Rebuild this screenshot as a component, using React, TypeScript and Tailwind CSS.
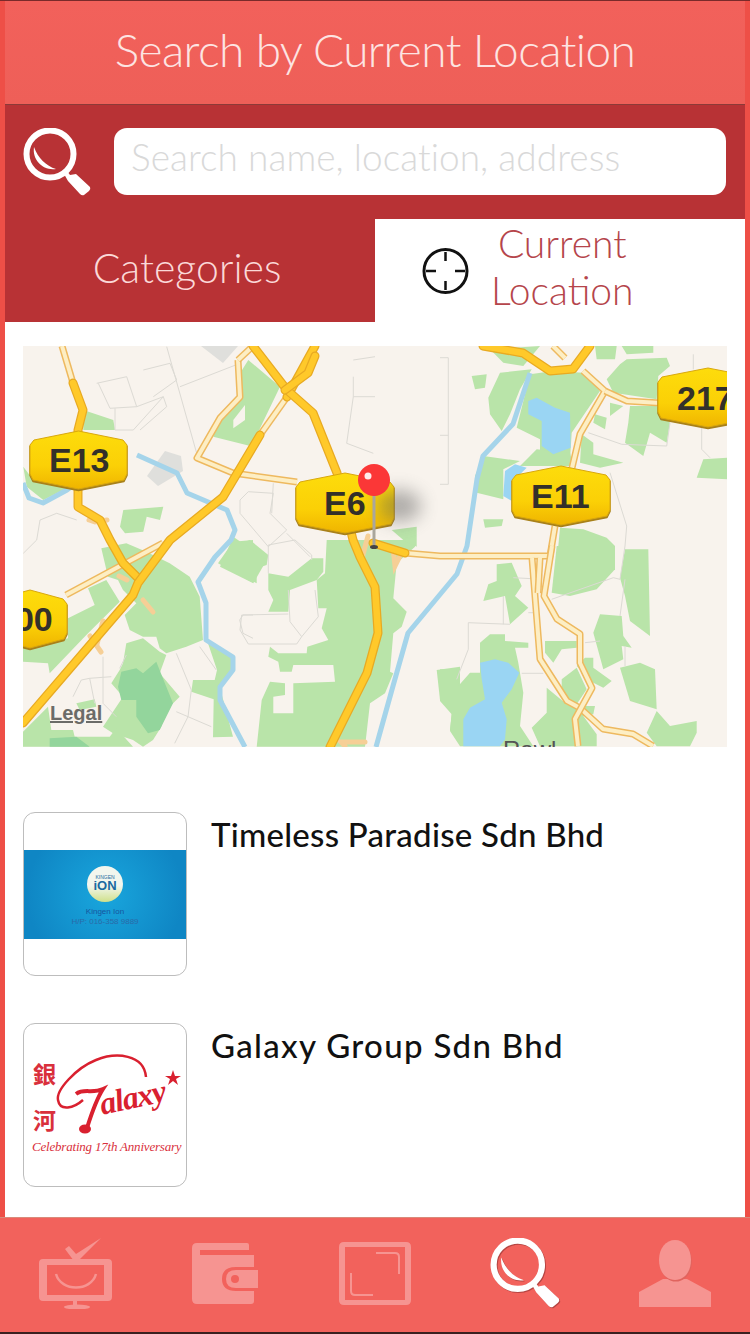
const sans = 'font-["Lato","Liberation_Sans",sans-serif]';

// map shapes were traced from crops, so each group carries its crop offset (crops are 3x)
const z = (ox: number, oy: number, pts: string) =>
  pts
    .split(' ')
    .map((p) => {
      const [x, y] = p.split(',').map(Number);
      return `${(ox + x / 3).toFixed(1)},${(oy + y / 3).toFixed(1)}`;
    })
    .join(' ');

const greens = [
  ...[
    '235,25 310,10 370,35 440,70 500,110 530,170 540,300 490,320 430,340 410,325 400,290 360,290 320,270 305,225 340,190 300,150 285,120 255,110',
    '135,235 215,195 195,145 250,120 290,185 190,285 80,400 75,370 0,365 0,325 135,295',
    '585,70 630,5 690,0 690,128',
    '300,370 310,310 360,295 410,335 430,345 410,400 470,470 430,510 415,560 390,600 360,620 330,600 270,580 240,560 300,470 265,430 290,390',
    '555,310 625,345 635,390 590,440 630,590 570,592 572,478 505,455 510,420 575,420 582,390',
    '0,575 75,500 85,570 150,570 155,590 260,590 280,565 330,620 0,620',
    '160,490 215,478 220,500 170,510',
  ].map((p) => z(0, 194, p)),
  ...[
    '0,20 60,0 115,45 110,75 80,85 80,130 0,90',
    '290,0 555,0 555,20 500,70 490,175 530,215 515,260 490,280 480,395 490,400 465,460 420,490 405,620 80,620 95,480 120,425 165,430 165,465 130,470 130,520 190,520 190,430 315,425 310,375 190,375 185,395 150,395 145,365 115,350 120,320 145,340 230,340 232,320 295,300 275,265 290,205 265,205 260,120 285,100',
    '115,100 175,110 245,55 280,55 280,95 260,120 180,150 175,215 115,215 130,180 115,150',
    '620,390 690,380 690,490 630,480',
    '665,520 690,520 690,575 660,570',
  ].map((p) => z(207, 194, p)),
  ...[
    '95,90 140,85 135,125 105,130',
    '145,155 180,80 275,70 240,130 210,205 185,255 150,205',
    '150,10 300,0 250,60 190,50',
    '270,85 340,75 430,80 480,135 395,260 390,340 300,320 300,280 230,245',
    '290,310 390,320 400,360 240,360',
    '130,330 240,345 190,370 190,460 110,440 105,390',
    '130,520 190,520 185,540 135,545',
    '500,100 540,55 560,40 680,35 690,60 655,90 650,160 520,140',
    '465,0 530,0 525,40 470,40',
    '545,0 640,0 640,20 560,25',
    '465,205 500,215 495,250 460,230',
    '570,180 650,180 690,230 680,290 630,260 610,330 555,290 565,230',
    '510,170 550,180 510,210',
    '425,265 460,290 460,325 550,350 480,365 420,350',
    '770,395 790,340 861,335 861,400',
    '360,545 430,550 500,575 525,600 355,600',
  ].map((p) => z(417, 0, p)),
  ...[
    '350,0 525,0 525,70 470,130 390,150 335,140',
    '555,10 625,10 630,270 570,225 555,150 540,95',
    '170,55 215,50 245,120 225,150 265,185 210,235 195,150 130,165 145,115 170,105',
    '480,205 545,210 550,270 575,305 545,300 550,340 490,370 460,260',
    '540,365 600,350 645,370 650,490 570,465',
    '650,495 690,540 770,525 770,560 750,601 650,601 620,560',
    '315,285 410,285 410,305 365,310 340,350 315,320',
    '435,335 460,335 460,365 515,405 490,425 460,410 410,360',
    '365,400 410,365 440,430 410,475 365,450',
    '320,425 380,475 440,480 465,480 460,505 430,510 470,565 470,601 300,601 275,545 320,500',
    '120,290 150,265 195,265 195,285 265,290 265,305 225,305 235,350 250,440 240,540 280,601 60,601 30,555 35,505 0,465 0,370 50,370 55,420 90,380 120,380',
  ].map((p) => z(417, 200, p)),
  ...[
    '745,60 840,140 780,265 760,320 640,290 650,240 715,180 720,100',
    '250,210 340,240 345,270 250,270',
    '70,380 100,420 200,445 130,480 80,440',
    '370,510 490,500 480,540 440,530 430,575 375,580 360,560',
    '660,680 700,590 800,660 760,730',
  ].map((p) => z(-23, -6, p)),
  z(352, -6, '50,570 125,560 125,620 85,600'),
];

const holes = [z(-23, -6, '700,240 735,195 735,240 700,265')];

const darkGreens = [
  z(0, 194, '295,395 340,385 360,400 400,365 430,440 450,490 410,570 375,580 340,530 340,480 295,480 285,440'),
  z(0, 194, '80,595 160,590 200,620 80,620'),
];

const streets = [
  ...[
    '240,350 240,490 280,530',
    '200,415 265,410',
    '150,470 175,420 200,415 215,490',
    '460,340 505,450 495,530 455,610',
    '460,515 495,530 565,560',
    '530,320 580,390',
    '290,385 310,345',
    '650,240 660,225 690,225',
    '650,240 660,280 690,295',
  ].map((p) => z(0, 194, p)),
  ...[
    '115,100 115,15 195,0 245,45 245,60',
    '175,150 180,245 215,290 265,230 255,150',
    '35,225 175,222',
    '35,225 30,270 55,312 200,312 215,290',
  ].map((p) => z(207, 194, p)),
  ...[
    '0,35 25,35 25,415 0,415',
    '0,268 25,268',
    '760,25 760,70',
    '785,245 785,310 810,335',
    '445,260 545,295 680,300 690,230',
    '510,380 560,540 555,600',
  ].map((p) => z(417, 0, p)),
  ...[
    '555,0 540,100 520,95 335,160',
    '540,210 555,100',
    '85,230 210,235',
    '85,230 85,310 50,400',
    '265,200 285,200',
    '190,150 190,235',
    '245,382 310,382',
    '220,95 275,98',
    '435,290 480,285',
    '555,300 555,360',
  ].map((p) => z(417, 200, p)),
  ...[
    '290,130 380,110 410,200 330,205 295,130',
    '345,205 345,270 400,270 490,170 410,200',
    '490,170 500,200 420,270',
    '430,90 510,70 530,120 460,170',
    '500,20 590,340',
    '540,140 720,70',
    '120,540 170,520 230,540',
    '120,540 110,600 70,640',
    '1060,110 1060,170 1040,310 1120,340',
    '1060,60 1125,50',
    '1060,170 1125,170',
    '720,480 745,455 820,460 810,520 860,570 805,620 720,520 720,480',
    '860,580 930,650',
    '820,430 815,520',
  ].map((p) => z(-23, -6, p)),
];

const water = [
  '0,137 6,152 20,157 44,144 70,125',
  '114,109 154,127 164,147 204,164 212,184 208,194 192,211 175,236 183,257 183,294 210,311 210,324 197,341 197,354 222,401',
  '507,27 490,78 460,110 454,133 444,200 434,228 385,287 370,340 353,401',
];

const lakes = [
  z(417, 0, '265,165 290,155 345,185 390,200 392,305 340,325 305,300 305,225 265,205'),
  z(417, 0, '195,375 225,355 260,365 225,400 215,465 190,450'),
  z(417, 200, '120,350 165,340 205,350 238,380 215,430 185,470 200,520 195,580 180,601 70,601 70,520 90,485 135,460 125,400'),
];

const greatRoads = [
  '50,37 60,64 55,84 55,161 77,174 87,194 100,217 115,232',
  '0,377 110,249 115,237 147,194 200,151 237,89',
  '264,51 292,0',
  '230,0 264,44 290,67 314,127 330,194 337,211 352,241 355,287 344,327 307,401',
  '460,0 500,7 527,25 550,23 567,0',
  '350,197 382,207',
  '262,44 285,27 292,10',
];

const paleRoads = [
  '39,0 50,37',
  '237,89 264,51',
  '215,14 217,51 197,72 174,112 210,127 274,136',
  '215,14 230,0',
  '43,249 140,197',
  '530,0 542,12',
  '560,25 582,45 557,88 549,122',
  '582,45 604,55 637,57',
  '532,180 527,210 417,210 382,207',
  '509,212 517,313 544,355 557,362 580,383 610,388 630,400',
  '529,200 521,250 534,273 557,288 557,317 569,342 552,373 555,400',
  '517,212 515,247',
];

const ramps = [
  '66,174 72,176 84,174',
  '96,230 104,234',
  '120,254 130,266',
  '67,290 78,306',
  '80,275 74,298',
  '322,400 318,396 342,396',
  '345,190 339,212',
  '370,202 372,220 378,208',
];

function Shield({ x, y, w, h, label, tx }: { x: number; y: number; w: number; h: number; label: string; tx: number }) {
  const id = 'shield-' + label;
  const points = `${x + 4},${y + 9} ${x + w / 2},${y} ${x + w - 4},${y + 9} ${x + w},${y + 14} ${x + w},${y + h - 15} ${x + w - 3},${y + h - 9} ${x + w / 2},${y + h} ${x + 3},${y + h - 9} ${x},${y + h - 15} ${x},${y + 14}`;
  return (
    <g>
      <defs>
        <linearGradient id={id} x1="0" y1="0" x2="0" y2="1">
          <stop offset="0" stopColor="#fddc0c" />
          <stop offset="0.6" stopColor="#fbd006" />
          <stop offset="1" stopColor="#efb400" />
        </linearGradient>
      </defs>
      <polygon points={points} fill="#a8801a" transform="translate(0 1.5)" stroke="#a8801a" strokeWidth="1.5" strokeLinejoin="round" />
      <polygon points={points} fill={`url(#${id})`} stroke="#d9a80e" strokeWidth="1" strokeLinejoin="round" />
      <text x={tx} y={y + h / 2 + 12} fontFamily="Liberation Sans, sans-serif" fontWeight="700" fontSize="34" fill="#33302a">
        {label}
      </text>
    </g>
  );
}

function MapView() {
  return (
    <svg viewBox="0 0 704 401" className="block h-[401px] w-[704px]">
      <defs>
        <filter id="pin-shadow" x="-100%" y="-100%" width="300%" height="300%">
          <feGaussianBlur stdDeviation="9" />
        </filter>
        <filter id="soft" x="0" y="0" width="100%" height="100%">
          <feGaussianBlur stdDeviation="0.6" />
        </filter>
      </defs>
      <g filter="url(#soft)">
        <rect width="704" height="401" fill="#f8f3ed" />
        <polygon points="178,0 215,0 200,17" fill="#dfdfdc" />
        <polygon points="124,130 142,105 158,110 160,125 135,140" fill="#dfdfdc" />
        {greens.map((p) => (
          <polygon key={p} points={p} fill="#b9e4a9" />
        ))}
        {holes.map((p) => (
          <polygon key={p} points={p} fill="#f8f3ed" />
        ))}
        {darkGreens.map((p) => (
          <polygon key={p} points={p} fill="#93d59c" />
        ))}
        {streets.map((p) => (
          <polyline key={p} points={p} fill="none" stroke="#dcdad4" strokeWidth="1" />
        ))}
        {water.map((p) => (
          <polyline key={p} points={p} fill="none" stroke="#a5d4ea" strokeWidth="5" strokeLinejoin="round" />
        ))}
        {lakes.map((p) => (
          <polygon key={p} points={p} fill="#9ad5f3" />
        ))}
        {ramps.map((p) => (
          <polyline key={p} points={p} fill="none" stroke="#f6cf96" strokeWidth="5" strokeLinecap="round" />
        ))}
        {paleRoads.map((p) => (
          <g key={p}>
            <polyline points={p} fill="none" stroke="#eeb95f" strokeWidth="7" strokeLinejoin="round" />
            <polyline points={p} fill="none" stroke="#fdeec4" strokeWidth="4" strokeLinejoin="round" />
          </g>
        ))}
        {greatRoads.map((p) => (
          <g key={p}>
            <polyline points={p} fill="none" stroke="#e8aa22" strokeWidth="9" strokeLinejoin="round" strokeLinecap="round" />
            <polyline points={p} fill="none" stroke="#ffc92c" strokeWidth="6.5" strokeLinejoin="round" strokeLinecap="round" />
          </g>
        ))}
      </g>
      <text x="480" y="412" fontFamily="Liberation Sans, sans-serif" fontSize="24" fill="#555">
        Rawl
      </text>
      <text x="27" y="374" fontFamily="Liberation Sans, sans-serif" fontWeight="700" fontSize="20" fill="#6b6b68" textDecoration="underline">
        Legal
      </text>
      <Shield x={7} y={85} w={97} h={58} label="E13" tx={26} />
      <Shield x={273} y={127} w={98} h={60} label="E6" tx={301} />
      <Shield x={489} y={120} w={98} h={59} label="E11" tx={508} />
      <Shield x={-30} y={244} w={74} h={58} label="900" tx={-27} />
      <Shield x={635} y={22} w={100} h={59} label="217" tx={654} />
      <ellipse cx="376" cy="160" rx="22" ry="16" fill="#555" opacity="0.45" filter="url(#pin-shadow)" />
      <rect x="349.5" y="148" width="3" height="53" fill="#a9a69c" />
      <ellipse cx="351" cy="201" rx="4" ry="2" fill="#444" />
      <circle cx="351" cy="134" r="16" fill="#fb3737" />
      <circle cx="345" cy="130" r="3.5" fill="#fff" opacity="0.9" />
    </svg>
  );
}

function SearchIcon({ className }: { className: string }) {
  return (
    <svg viewBox="0 0 68 68" className={className}>
      <circle cx="27" cy="26" r="23.5" fill="none" stroke="#fff" strokeWidth="6" />
      <path d="M11 19 C 9 32, 20 43, 33 41 C 23 38, 15 30, 11 19 Z" fill="#fff" />
      <path d="M41 46 L 44 43 L 47 47 L 53 46 L 67 59 Q 68 61 66 63 L 61 67 Q 59 68 57 66 L 45 53 Z" fill="#fff" />
    </svg>
  );
}

function TvIcon() {
  return (
    <svg viewBox="0 0 73 72" className="h-[72px] w-[73px]">
      <path d="M26 12 L 30 9 L 37 17 L 62 1 L 39 24 L 35 24 Z" fill="#f69491" />
      <path fillRule="evenodd" d="M4 22 H69 Q73 22 73 26 V 60 Q73 64 69 64 H 4 Q0 64 0 60 V 26 Q0 22 4 22 Z M8 28 V 58 H 65 V 28 Z" fill="#f69491" />
      <path d="M17 37 C 22 55, 52 55, 57 37" fill="none" stroke="#f69491" strokeWidth="2.5" />
      <path d="M36 64 V 69" stroke="#f69491" strokeWidth="4" />
      <ellipse cx="38" cy="70" rx="13" ry="2.5" fill="#f69491" />
    </svg>
  );
}

function WalletIcon() {
  return (
    <svg viewBox="0 0 66 61" className="h-[61px] w-[66px]">
      <path fillRule="evenodd" d="M5 0 H55 Q57 0 57 2 V 7 H8 V 12 H62 V 24 H44 Q30 24 30 36 Q30 48 44 48 H62 V 58 Q62 61 59 61 H5 Q0 61 0 56 V 5 Q0 0 5 0 Z" fill="#f69491" />
      <path fillRule="evenodd" d="M44 27 H66 V 45 H44 Q34 45 34 36 Q34 27 44 27 Z M43 32 A4 4 0 1 0 43 40 A4 4 0 1 0 43 32 Z" fill="#f69491" />
    </svg>
  );
}

function SquareIcon() {
  return (
    <svg viewBox="0 0 72 63" className="h-[63px] w-[72px]">
      <path fillRule="evenodd" d="M5 0 H67 Q72 0 72 5 V 58 Q72 63 67 63 H5 Q0 63 0 58 V 5 Q0 0 5 0 Z M6 5 V 58 H66 V 5 Z" fill="#f69491" />
      <path d="M37 11 H56 Q60 11 60 15 V 32" fill="none" stroke="#f69491" strokeWidth="2" />
      <path d="M12 31 V 49 Q12 53 16 53 H 34" fill="none" stroke="#f69491" strokeWidth="2" />
    </svg>
  );
}

const headPath = 'M36 0 C 27 0 20 8 20 20 C 20 32 27 40 36 40 C 45 40 52 32 52 20 C 52 8 45 0 36 0 Z';

function PersonIcon() {
  return (
    <svg viewBox="0 0 72 67" className="h-[67px] w-[72px]">
      <path d="M24 39 H 48 L 72 52 V 67 H 0 V 52 Z" fill="#f69491" />
      <path d={headPath} fill="#e0645e" transform="translate(0.8 1.6)" />
      <path d={headPath} fill="#f69491" />
    </svg>
  );
}

function CrosshairIcon() {
  return (
    <svg viewBox="0 0 47 46" className="h-[46px] w-[47px]">
      <circle cx="23.5" cy="23" r="21.5" fill="none" stroke="#111" strokeWidth="3" />
      <path d="M23.5 4 V 13 M23.5 33 V 42 M4 23 H 14 M33 23 H 43" stroke="#111" strokeWidth="2.5" />
    </svg>
  );
}

function KingenCard() {
  return (
    <div className="flex h-[89px] w-full flex-col items-center justify-start bg-[radial-gradient(circle_at_50%_50%,#19a6dd,#0f86c4_85%)] pt-[16px]">
      <div className="flex h-[36px] w-[36px] flex-col items-center justify-center rounded-full bg-[linear-gradient(#f2f6ee_55%,#cfe08a)] leading-none">
        <span className="font-['Liberation_Sans',sans-serif] text-[5px] text-[#1a6aa0]">KINGEN</span>
        <span className="font-['Liberation_Sans',sans-serif] text-[13px] font-bold leading-[12px] text-[#1a6aa0]">iON</span>
      </div>
      <span className="mt-[5px] font-['Liberation_Sans',sans-serif] text-[8px] leading-[10px] text-[#16559e]">Kingen Ion</span>
      <span className="font-['Liberation_Sans',sans-serif] text-[8px] leading-[10px] text-[#2a6aa8]">H/P: 016-358 9889</span>
    </div>
  );
}

function GalaxyLogo() {
  return (
    <div className="relative h-[162px] w-full overflow-hidden">
      <div className="absolute left-[9px] top-[26px] font-['Noto_Sans_CJK_TC',sans-serif] text-[23px] font-bold leading-[46px] text-[#d9303c]">
        <div>銀</div>
        <div>河</div>
      </div>
      <svg viewBox="0 0 162 162" className="absolute inset-0 h-[162px] w-[162px]">
        <path d="M122 53 C 120 30 92 28 72 36 C 52 44 32 66 34 76 C 36 88 50 84 59 76" fill="none" stroke="#d9202f" strokeWidth="2.5" />
        <path d="M52 70 C 60 64 68 70 79 65 C 72 76 68 88 63 104" fill="none" stroke="#d9202f" strokeWidth="4" />
        <ellipse cx="61" cy="105" rx="6" ry="4.5" fill="#d9202f" />
        <polygon points="149,46 151,52 157,52 152,55 154,61 149,57 144,61 146,55 141,52 147,52" fill="#d9202f" />
      </svg>
      <span className="absolute left-[76px] top-[64px] origin-left -rotate-12 font-['Liberation_Serif',serif] text-[32px] font-bold italic leading-none tracking-[-1px] text-[#d9202f]">
        alaxy
      </span>
      <span className="absolute left-[8px] top-[116px] whitespace-nowrap font-['Liberation_Serif',serif] text-[13px] italic leading-none tracking-[-0.2px] text-[#d9303c]">
        Celebrating 17th Anniversary
      </span>
    </div>
  );
}

function ResultRow({ name, children, className, nameClass }: { name: string; children: React.ReactNode; className: string; nameClass: string }) {
  return (
    <div className={`flex items-start gap-[24px] ${className}`}>
      <div className="flex h-[164px] w-[164px] shrink-0 items-center overflow-hidden rounded-[12px] border border-[#bdbdbd] bg-white">
        {children}
      </div>
      <div className={`${sans} pt-[1px] text-[33px] font-medium leading-[42px] text-[#111] ${nameClass}`}>{name}</div>
    </div>
  );
}

export default function App() {
  return (
    <div className={`${sans} flex h-[1334px] w-[750px] flex-col overflow-hidden bg-[#ee4f47]`}>
      <div className="h-px bg-[#7a2a2a]" />
      <div className="flex min-h-0 flex-1 flex-col px-[5px]">
        <header className="flex h-[104px] items-center justify-center border-b border-[#8d3a38] bg-[linear-gradient(#f2615b,#ee5f58)] pb-[6px] text-[46px] font-light leading-none tracking-[-0.6px] text-[#fde4e2]">
          Search by Current Location
        </header>

        <div className="flex h-[114px] items-start gap-[23px] bg-[#b83235] pl-[18px] pr-[19px] pt-[23px]">
          <SearchIcon className="h-[68px] w-[68px] shrink-0" />
          <input
            readOnly
            placeholder="Search name, location, address"
            className="h-[67px] min-w-0 flex-1 rounded-[13px] bg-white pb-[10px] pl-[17px] pr-[17px] text-[37px] tracking-[0.05px] font-light text-[#333] outline-none placeholder:text-[#d9d9d9]"
          />
        </div>

        <div className="flex h-[103px]">
          <button className="flex w-[370px] items-center justify-center bg-[#b83235] pb-[6px] pr-[6px] text-[41px] font-light text-[#fbd9d8]">
            Categories
          </button>
          <div className="flex flex-1 items-center bg-white pl-[47px]">
            <CrosshairIcon />
            <div className="ml-[22px] pb-[8px] text-center text-[39px] font-light leading-[47px] text-[#b5454b]">
              Current
              <br />
              Location
            </div>
          </div>
        </div>

        <main className="min-h-0 flex-1 bg-white pl-[18px] pr-[18px] pt-[24px]">
          <MapView />
          <ResultRow name="Timeless Paradise Sdn Bhd" className="mt-[65px]" nameClass="tracking-[0.25px]">
            <KingenCard />
          </ResultRow>
          <ResultRow name="Galaxy Group Sdn Bhd" className="mt-[47px]" nameClass="tracking-[1.3px]">
            <GalaxyLogo />
          </ResultRow>
        </main>
      </div>

      <nav className="grid h-[117px] grid-cols-5 items-center border-t border-[#d98a7a] border-b-2 border-b-[#3a2020] bg-[#f2625c] pb-[4px]">
        <div className="flex justify-center"><TvIcon /></div>
        <div className="flex justify-center"><WalletIcon /></div>
        <div className="flex justify-center"><SquareIcon /></div>
        <div className="flex justify-center"><SearchIcon className="h-[70px] w-[70px] drop-shadow-[1px_1px_0_rgba(120,40,40,0.5)]" /></div>
        <div className="flex justify-center"><PersonIcon /></div>
      </nav>
    </div>
  );
}
